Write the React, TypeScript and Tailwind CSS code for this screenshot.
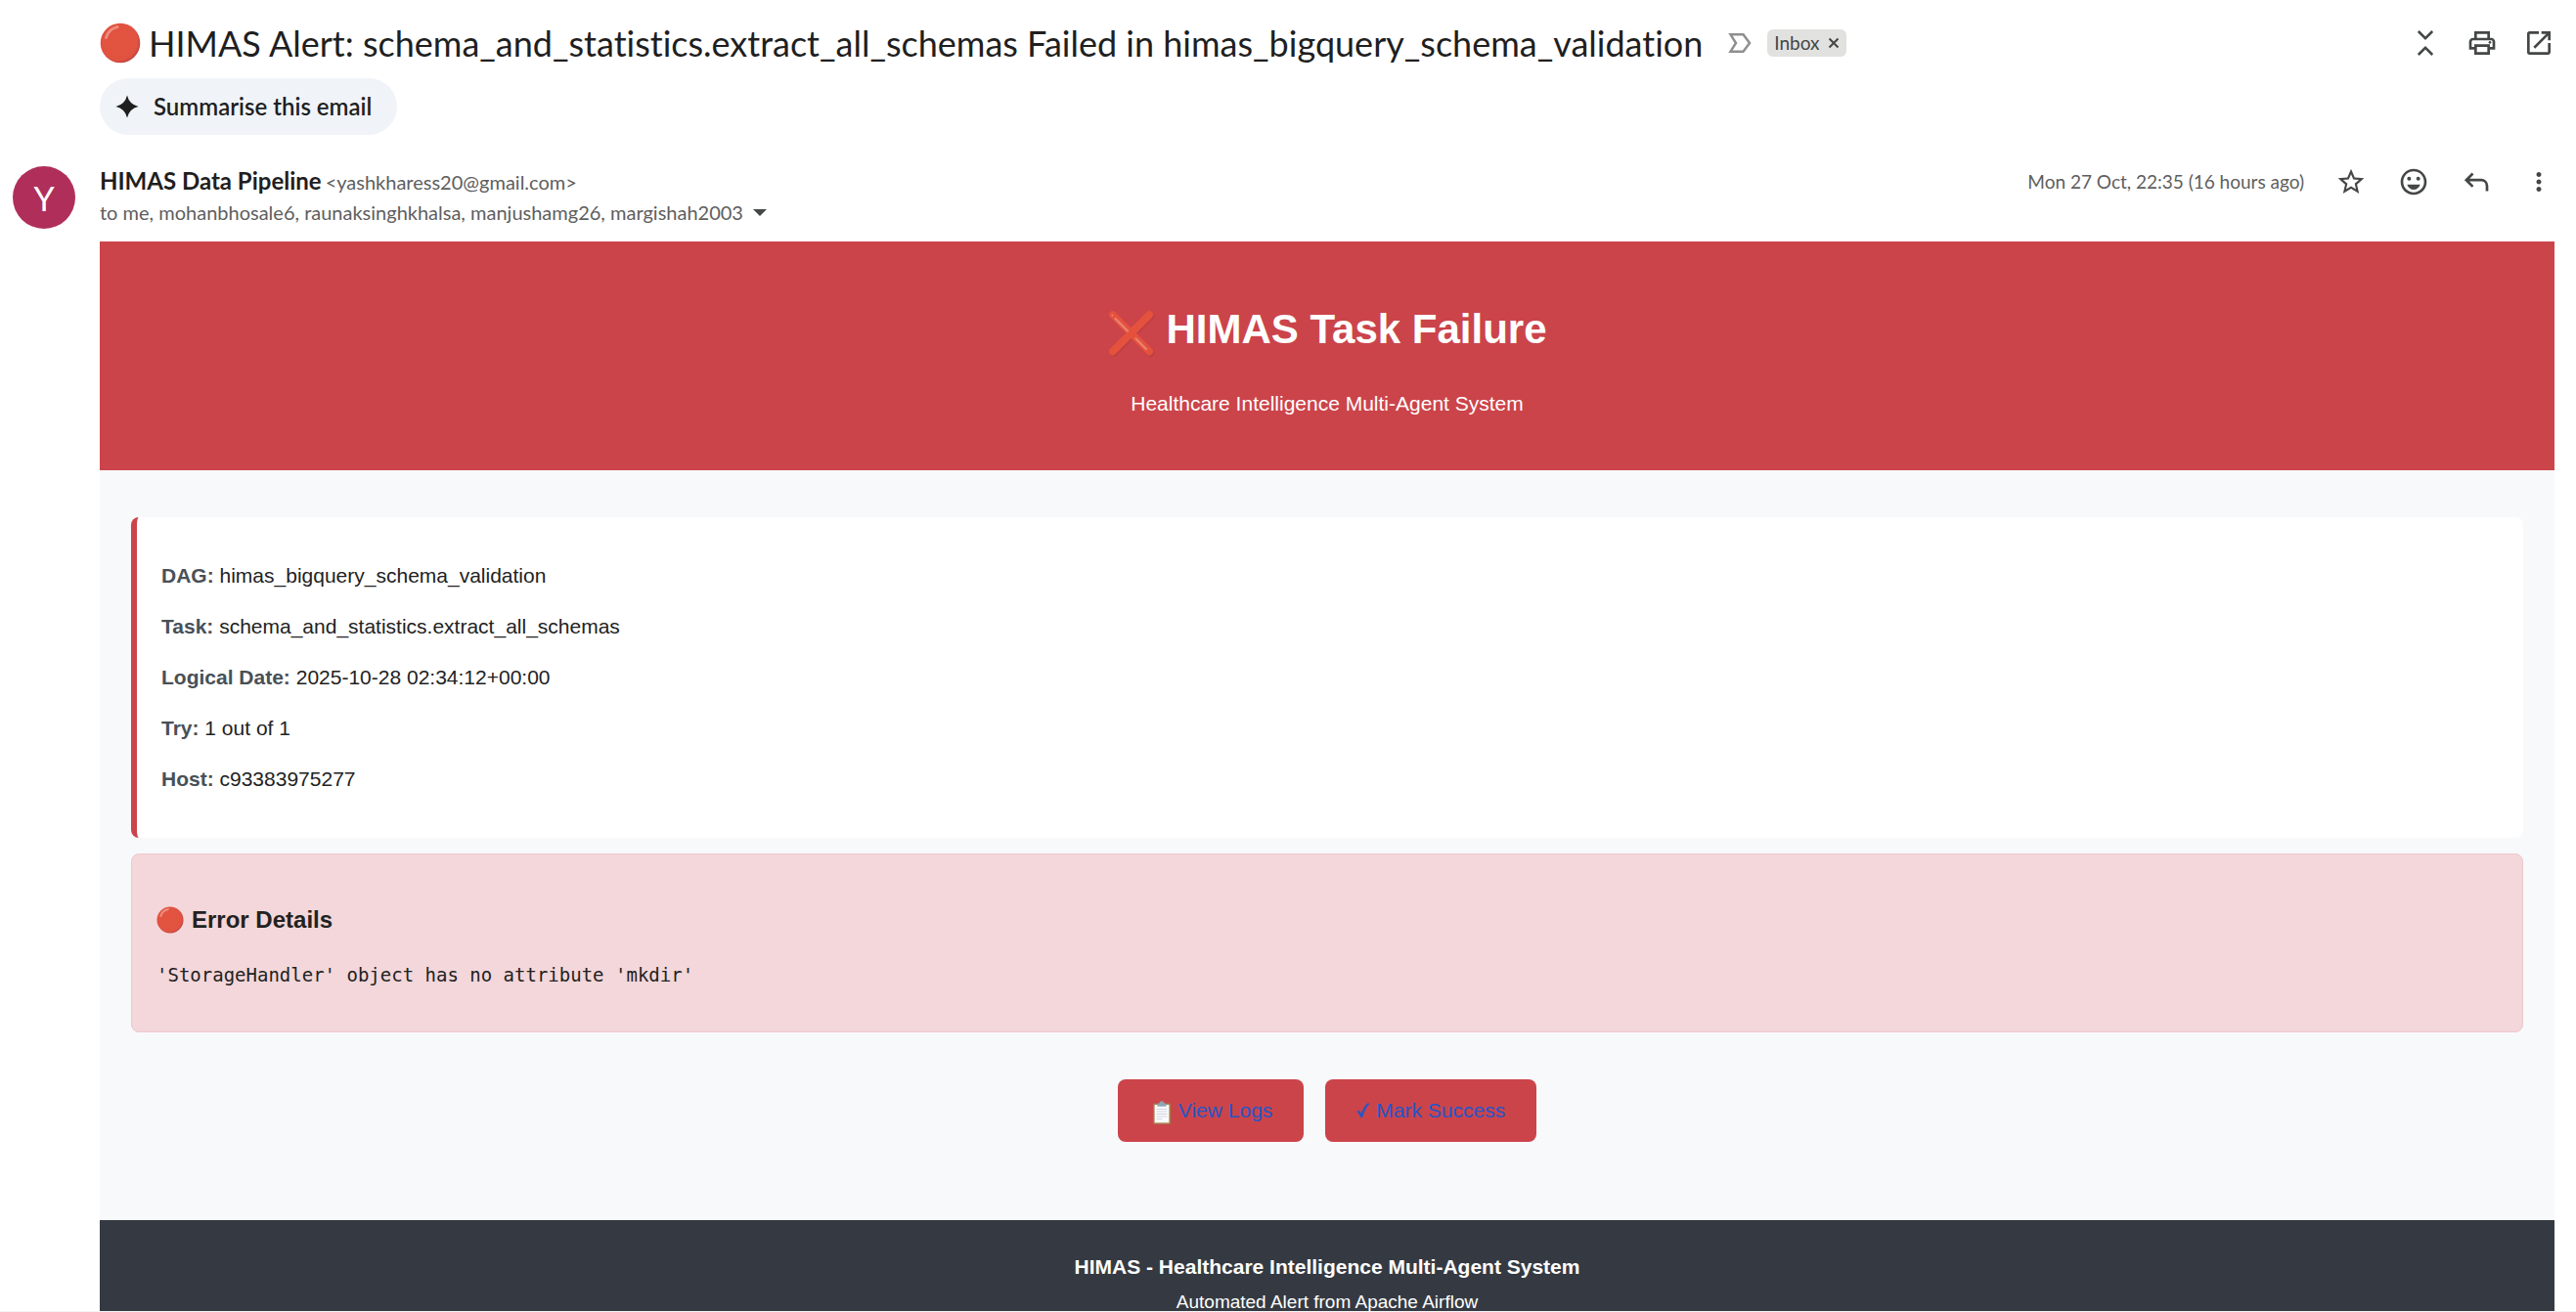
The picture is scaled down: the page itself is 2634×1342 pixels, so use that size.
import type { ReactNode } from "react";
import {
  MdMoreVert,
  MdOpenInNew,
  MdOutlineEmojiEmotions,
  MdOutlinePrint,
  MdStarBorder,
} from "react-icons/md";

function RedCircle({ id, className }: { id: string; className: string }) {
  return (
    <svg viewBox="0 0 42 42" className={className} aria-hidden="true">
      <defs>
        <radialGradient id={id} cx="0.46" cy="0.46" r="0.54">
          <stop offset="0" stopColor="#e2533f" />
          <stop offset="0.88" stopColor="#e15240" />
          <stop offset="1" stopColor="#c0453f" />
        </radialGradient>
      </defs>
      <circle cx="21" cy="21" r="20.3" fill={`url(#${id})`} />
      <path d="M6.5 15.5C8 9.5 12 6 18 4.6" fill="none" stroke="#f09b8e" strokeWidth="3" strokeLinecap="round" opacity="0.8" />
    </svg>
  );
}

function CrossMark() {
  return (
    <svg viewBox="0 0 48 48" className="mt-2 h-12 w-12" aria-hidden="true">
      <g strokeLinecap="round" fill="none">
        <path d="M6 6.5L43.5 44M43.5 6.5L6 44" stroke="#b63c3f" strokeWidth="7.5" opacity="0.6" />
        <path d="M4.8 5L42.3 42.5M42.3 5L4.8 42.5" stroke="#e4523d" strokeWidth="7.5" />
        <path d="M7.5 9L20 21.5M28.5 29.5L39 40" stroke="#ea8272" strokeWidth="2.4" />
        <circle cx="4.4" cy="5.6" r="1.1" fill="#ea8272" />
      </g>
    </svg>
  );
}

function Clipboard() {
  return (
    <svg viewBox="0 0 26 26" className="mt-1 h-6.5 w-6.5" aria-hidden="true">
      <rect x="4" y="3.6" width="18" height="21.4" rx="1.4" fill="#a77b4c" />
      <rect x="5.6" y="5" width="14.8" height="18.4" fill="#fbfbfb" />
      <path d="M7.5 9.5h11M7.5 12h11M7.5 14.5h11M7.5 17h11M7.5 19.6h6" stroke="#cfd4de" strokeWidth="1" />
      <path d="M8.4 6.8V5.2c0-1 .8-1.6 2-1.8C11 2 11.8 1.3 13 1.3s2 .7 2.6 2.1c1.2.2 2 .8 2 1.8v1.6z" fill="#8fa6b5" />
    </svg>
  );
}

function CheckMark() {
  return (
    <svg viewBox="0 0 16 18" className="h-[18px] w-3.5" fill="currentColor" aria-hidden="true">
      <path d="M1 10.2C1.6 9 3 8.8 3.8 10L5.6 12.8C7.6 7.6 10 3.4 12.4 1.2C13.2 0.6 14.4 0.6 15 1C11.6 4.2 8.8 10 7 16.2C6.6 17.2 5.2 17.2 4.8 16.4C3.8 14 2.6 11.8 1 10.2z" stroke="currentColor" strokeWidth="0.6" />
    </svg>
  );
}

function CollapseIcon() {
  return (
    <svg viewBox="0 0 32 32" className="h-8 w-8" fill="none" stroke="currentColor" strokeWidth="2.5" aria-hidden="true">
      <path d="M8.8 4l7.2 7.2L23.2 4M8.8 28l7.2-7.2 7.2 7.2" />
    </svg>
  );
}

function ReplyIcon() {
  return (
    <svg viewBox="0 0 32 32" className="h-8 w-8" fill="none" stroke="currentColor" strokeWidth="2.7" aria-hidden="true">
      <path d="M12.5 7.5L5.8 14.2l6.7 6.7M5.8 14.2H21c3.5 0 6 2.5 6 6V25.5" />
    </svg>
  );
}

function IconButton({ label, children }: { label: string; children: ReactNode }) {
  return (
    <button type="button" aria-label={label} className="flex h-8 w-8 items-center justify-center text-[#444746]">
      {children}
    </button>
  );
}

const details: [string, string][] = [
  ["DAG:", "himas_bigquery_schema_validation"],
  ["Task:", "schema_and_statistics.extract_all_schemas"],
  ["Logical Date:", "2025-10-28 02:34:12+00:00"],
  ["Try:", "1 out of 1"],
  ["Host:", "c93383975277"],
];

export default function App() {
  return (
    <div className="flex max-h-screen flex-col overflow-hidden border-b border-gray-100 bg-white pr-[22px] font-['Lato',sans-serif] text-[#1f1f1f] [font-variant-ligatures:none]">
      <header className="ml-[102px] shrink-0">
        <div className="flex h-20 items-center justify-between pt-2">
          <div className="flex items-center">
            <h1 className="flex items-center gap-2 text-[36px] leading-[44px]">
              <RedCircle id="subject-dot" className="h-[42px] w-[42px]" />
              HIMAS Alert: schema_and_statistics.extract_all_schemas Failed in himas_bigquery_schema_validation
            </h1>
            <svg viewBox="0 0 24 20" className="ml-[26px] h-5 w-6" fill="none" stroke="#8e8f8e" strokeWidth="2.5" aria-hidden="true">
              <path d="M2.5 1.3H15.5L22 10l-6.5 8.7H2.5L8 10z" />
            </svg>
            <span className="ml-4 flex h-7 items-center gap-2 rounded-md bg-[#e1e2e0] px-[7px] text-[19px] leading-7 text-[#444746]">
              Inbox
              <button type="button" aria-label="Remove label Inbox" className="flex items-center">
                <svg viewBox="0 0 12 12" className="h-3 w-3" fill="none" stroke="currentColor" strokeWidth="2" aria-hidden="true">
                  <path d="M1.5 1.5l9 9M10.5 1.5l-9 9" />
                </svg>
              </button>
            </span>
          </div>
          <div className="flex gap-[26px]">
            <IconButton label="Collapse all"><CollapseIcon /></IconButton>
            <IconButton label="Print all"><MdOutlinePrint size={32} /></IconButton>
            <IconButton label="Open in new window"><MdOpenInNew size={32} /></IconButton>
          </div>
        </div>
        <button type="button" className="flex h-[58px] items-center gap-[15px] rounded-full bg-[#f0f4f9] pr-[26px] pl-4 text-[24px] font-semibold">
          <svg viewBox="0 0 24 24" className="h-6 w-6" fill="currentColor" aria-hidden="true">
            <path d="M12 0.5Q14.2 9.8 23.5 12Q14.2 14.2 12 23.5Q9.8 14.2 0.5 12Q9.8 9.8 12 0.5z" />
          </svg>
          Summarise this email
        </button>
      </header>

      <section className="flex shrink-0 pt-8 pb-[13px] pl-[13px]">
        <div className="flex h-16 w-16 shrink-0 items-center justify-center rounded-full bg-[#b02e5a] text-[34px] text-white">Y</div>
        <div className="ml-[25px] flex grow justify-between">
          <div className="text-[20px] leading-8 text-[#5e5e5e]">
            <p className="flex h-[31px] items-baseline gap-1 leading-[30px]">
              <span className="text-[24px] font-bold text-[#1f1f1f]">HIMAS Data Pipeline</span>
              <span>&lt;yashkharess20@gmail.com&gt;</span>
            </p>
            <p className="flex items-center gap-2.5">
              to me, mohanbhosale6, raunaksinghkhalsa, manjushamg26, margishah2003
              <button type="button" aria-label="Show details">
                <svg viewBox="0 0 14 7" className="h-[7px] w-3.5" fill="#444746" aria-hidden="true">
                  <path d="M0 0h14L7 7z" />
                </svg>
              </button>
            </p>
          </div>
          <div className="flex h-8 items-center gap-8">
            <time className="text-[19px] text-[#5e5e5e]">Mon 27 Oct, 22:35 (16 hours ago)</time>
            <IconButton label="Star"><MdStarBorder size={32} /></IconButton>
            <IconButton label="Add reaction"><MdOutlineEmojiEmotions size={32} /></IconButton>
            <IconButton label="Reply"><ReplyIcon /></IconButton>
            <IconButton label="More"><MdMoreVert size={30} /></IconButton>
          </div>
        </div>
      </section>

      <article className="ml-[102px] bg-[#f8f9fb] font-['Liberation_Sans',Arial,sans-serif] text-[21px] text-[#222222]">
        <div className="flex h-[234px] flex-col items-center bg-[#cb444a] pt-16 text-white">
          <h2 className="flex h-[52px] items-center gap-3 text-[42px] leading-[52px] font-bold">
            <CrossMark />
            HIMAS Task Failure
          </h2>
          <p className="mt-[34px] leading-8">Healthcare Intelligence Multi-Agent System</p>
        </div>

        <div className="flex flex-col px-8 pt-12 pb-20">
          <div className="rounded-lg border-l-[6px] border-[#cb444a] bg-white py-[34px] pl-[25px] leading-[52px]">
            {details.map(([label, value]) => (
              <p key={label}>
                <strong className="text-[#495057]">{label}</strong> {value}
              </p>
            ))}
          </div>

          <div className="mt-4 rounded-lg border border-[#edc8ce] bg-[#f3d7da] px-[25px] pt-[51px] pb-[42px]">
            <h3 className="flex items-center gap-2 text-[24px] leading-8 font-bold">
              <RedCircle id="error-dot" className="h-7 w-7" />
              Error Details
            </h3>
            <pre className="mt-6 font-['DejaVu_Sans_Mono',monospace] text-[19px] leading-8">'StorageHandler' object has no attribute 'mkdir'</pre>
          </div>

          <div className="mt-12 flex justify-center gap-[22px] text-[#2456c8]">
            <a href="#logs" className="flex h-16 items-center gap-1 rounded-lg bg-[#cb444a] px-8">
              <Clipboard />
              View Logs
            </a>
            <a href="#success" className="flex h-16 items-center gap-1.5 rounded-lg bg-[#cb444a] px-8">
              <CheckMark />
              Mark Success
            </a>
          </div>
        </div>

        <footer className="bg-[#353a42] pt-[30px] pb-8 text-center leading-9 text-white">
          <p className="font-bold">HIMAS - Healthcare Intelligence Multi-Agent System</p>
          <p className="text-[19px]">Automated Alert from Apache Airflow</p>
        </footer>
      </article>
    </div>
  );
}
